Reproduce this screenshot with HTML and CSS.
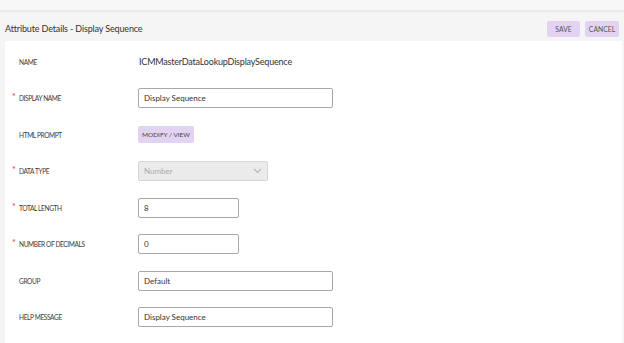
FILE: index.html
```html
<!DOCTYPE html>
<html lang="en">
<head>
    <meta charset="UTF-8">
    <title>Attribute Details</title>
    <link rel="stylesheet" href="styles.css">
</head>
<body>
    <div class="topbar"></div>

    <div class="header">
        <h1 class="title">Attribute Details - Display Sequence</h1>
        <div class="actions">
            <button class="btn btn-save">SAVE</button>
            <button class="btn btn-cancel">CANCEL</button>
        </div>
    </div>

    <div class="panel">
        <div class="row">
            <span class="req"></span>
            <label class="label">Name</label>
            <span class="value">ICMMasterDataLookupDisplaySequence</span>
        </div>
        <div class="row">
            <span class="req">*</span>
            <label class="label">Display Name</label>
            <input class="field wide" type="text" value="Display Sequence">
        </div>
        <div class="row">
            <span class="req"></span>
            <label class="label">HTML Prompt</label>
            <button class="btn btn-prompt">MODIFY / VIEW</button>
        </div>
        <div class="row">
            <span class="req">*</span>
            <label class="label">Data Type</label>
            <div class="select">
                <span>Number</span>
                <svg class="chevron" width="9" height="6" viewBox="0 0 9 6">
                    <path d="M1 1l3.5 3.5L8 1" fill="none" stroke="#b5b5b5" stroke-width="1.1"/>
                </svg>
            </div>
        </div>
        <div class="row">
            <span class="req">*</span>
            <label class="label">Total Length</label>
            <input class="field short" type="text" value="8">
        </div>
        <div class="row">
            <span class="req">*</span>
            <label class="label">Number of Decimals</label>
            <input class="field short" type="text" value="0">
        </div>
        <div class="row">
            <span class="req"></span>
            <label class="label">Group</label>
            <input class="field wide" type="text" value="Default">
        </div>
        <div class="row">
            <span class="req"></span>
            <label class="label">Help Message</label>
            <input class="field wide" type="text" value="Display Sequence">
        </div>
    </div>
</body>
</html>
```

FILE: styles.css
```css
body {
    margin: 0;
    padding: 0;
    font-family: 'Lato', 'Liberation Sans', sans-serif;
    background-color: #f5f5f5;
    color: #333;
    height: 343px;
    overflow: hidden;
}

.topbar {
    height: 10px;
    background: #f7f7f7;
    border-bottom: 2px solid #ebebeb;
}

.header {
    height: 29px;
    display: flex;
    align-items: center;
    justify-content: space-between;
    padding: 0 5px 0 5px;
    background: #f5f5f5;
}

.title {
    font-size: 9px;
    font-weight: 400;
    letter-spacing: -0.15px;
    color: #333;
    margin: 4px 0 0 0;
}

.actions {
    display: flex;
    gap: 5px;
    margin-top: 4px;
}

.btn {
    font-family: 'Liberation Sans Narrow', 'Lato', sans-serif;
    font-size: 6.8px;
    color: #555;
    background: #e2d3f2;
    border: none;
    border-radius: 2px;
    height: 16px;
    padding: 0;
    cursor: pointer;
}

.btn-save {
    width: 33px;
}

.btn-cancel {
    width: 34px;
}

.panel {
    background: #fff;
    margin: 0 2px 0 5px;
    padding-top: 2.5px;
    height: 304px;
}

.row {
    display: flex;
    align-items: center;
    height: 36.5px;
    padding-left: 7px;
}

.req {
    width: 7px;
    color: #e53935;
    font-size: 9px;
    align-self: center;
    margin-top: -3px;
}

.label {
    width: 119px;
    font-family: 'Liberation Sans Narrow', 'Lato', sans-serif;
    font-size: 6.6px;
    letter-spacing: -0.4px;
    text-transform: uppercase;
    color: #3c3c3c;
}

.value {
    font-size: 9px;
    letter-spacing: -0.2px;
    color: #333;
    margin-left: 1px;
    margin-top: -1px;
}

.field {
    font-family: inherit;
    font-size: 8px;
    color: #333;
    height: 20px;
    box-sizing: border-box;
    border: 1px solid #a8a8a8;
    border-radius: 2px;
    padding: 0 5px;
    outline: none;
}

.wide {
    width: 195px;
}

.short {
    width: 101px;
}

.btn-prompt {
    height: 17px;
    width: 56px;
    color: #444;
    font-size: 6.5px;
}

.select {
    width: 130px;
    height: 20px;
    box-sizing: border-box;
    background: #ebebeb;
    border: 1px solid #d6d6d6;
    border-radius: 2px;
    display: flex;
    align-items: center;
    justify-content: space-between;
    padding: 0 5px 0 5px;
    font-size: 8px;
    color: #aaa;
}
```
